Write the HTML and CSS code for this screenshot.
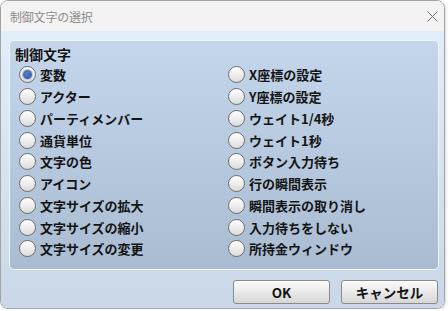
FILE: index.html
```html
<!DOCTYPE html>
<html lang="ja">
  <head>
    <meta charset="UTF-8" />
    <meta name="viewport" content="width=device-width, initial-scale=1.0" />
    <title>制御文字の選択</title>
    <link rel="stylesheet" href="styles.css">
  </head>
  <body>
    <div class="dialog">
      <div class="titlebar">
        <span class="title">制御文字の選択</span>
        <svg class="close" width="11" height="11" viewBox="0 0 11 11" aria-label="閉じる">
          <path d="M0.5 0.5 L10.5 10.5 M10.5 0.5 L0.5 10.5" stroke="#727272" stroke-width="1" fill="none" />
        </svg>
      </div>

      <div class="content">
        <div class="group">
          <div class="legend">制御文字</div>
          <div class="options">
            <label class="option"><span class="radio checked"></span>変数</label>
            <label class="option"><span class="radio"></span>X座標の設定</label>
            <label class="option"><span class="radio"></span>アクター</label>
            <label class="option"><span class="radio"></span>Y座標の設定</label>
            <label class="option"><span class="radio"></span>パーティメンバー</label>
            <label class="option"><span class="radio"></span>ウェイト1/4秒</label>
            <label class="option"><span class="radio"></span>通貨単位</label>
            <label class="option"><span class="radio"></span>ウェイト1秒</label>
            <label class="option"><span class="radio"></span>文字の色</label>
            <label class="option"><span class="radio"></span>ボタン入力待ち</label>
            <label class="option"><span class="radio"></span>アイコン</label>
            <label class="option"><span class="radio"></span>行の瞬間表示</label>
            <label class="option"><span class="radio"></span>文字サイズの拡大</label>
            <label class="option"><span class="radio"></span>瞬間表示の取り消し</label>
            <label class="option"><span class="radio"></span>文字サイズの縮小</label>
            <label class="option"><span class="radio"></span>入力待ちをしない</label>
            <label class="option"><span class="radio"></span>文字サイズの変更</label>
            <label class="option"><span class="radio"></span>所持金ウィンドウ</label>
          </div>
        </div>

        <div class="buttons">
          <button class="btn">OK</button>
          <button class="btn">キャンセル</button>
        </div>
      </div>
    </div>
  </body>
</html>
```

FILE: styles.css
```css
body {
  margin: 0;
  background-color: #ffffff;
  font-family: "Noto Sans CJK JP", "Noto Sans", sans-serif;
}

.dialog {
  width: 443px;
  height: 307px;
  border: 1px solid #a3a3a3;
  border-radius: 8px;
  overflow: hidden;
  display: flex;
  flex-direction: column;
  box-shadow: 1px 1px 3px rgba(0, 0, 0, 0.15);
}

.titlebar {
  height: 30px;
  flex: none;
  display: flex;
  align-items: center;
  justify-content: space-between;
  padding: 0 6px 0 9px;
  background-color: #f3f3f3;
}

.title {
  font-size: 12px;
  color: #8c8c8c;
  letter-spacing: -0.2px;
}

.close {
  display: block;
  margin-right: 0;
}

.content {
  flex: 1;
  display: flex;
  flex-direction: column;
  padding: 9px 5px 0 8px;
  background: linear-gradient(#e2edfa, #c9d7e6);
}

.group {
  height: 224px;
  border: 1px solid #f3f7fc;
  border-radius: 5px;
  background: linear-gradient(#c3d6eb, #a9bcd2);
  padding: 4px 0 0 0;
  box-sizing: content-box;
}

.legend {
  font-size: 14px;
  font-weight: bold;
  line-height: 19px;
  padding-left: 5px;
  color: #111;
  text-shadow: 0 0 2px rgba(255, 255, 255, 0.6);
}

.options {
  display: grid;
  grid-template-columns: 209px 1fr;
  grid-auto-rows: 21.75px;
  padding-left: 9px;
}

.option {
  display: flex;
  align-items: center;
  gap: 4px;
  font-size: 13px;
  font-weight: bold;
  color: #141414;
  white-space: nowrap;
}

.radio {
  width: 15px;
  height: 15px;
  flex: none;
  border: 1px solid #6c6c6c;
  border-radius: 50%;
  background: linear-gradient(#ffffff, #dcdcdc);
  display: flex;
  align-items: center;
  justify-content: center;
}

.radio.checked::after {
  content: "";
  width: 9px;
  height: 9px;
  border-radius: 50%;
  background: radial-gradient(circle at 40% 35%, #5a7cc4, #34519c);
  box-shadow: 0 0 0 1px #b5c3e0;
}

.buttons {
  display: flex;
  justify-content: flex-end;
  gap: 11px;
  margin-top: 10px;
  padding-right: 1px;
}

.btn {
  width: 97px;
  height: 24px;
  border: 1px solid #8a8a8a;
  border-radius: 3px;
  background: linear-gradient(#fbfbfb, #e9e9e9 50%, #d6d6d6);
  font-family: "Noto Sans CJK JP", "Noto Sans", sans-serif;
  font-size: 13.5px;
  font-weight: bold;
  color: #151515;
  padding: 0;
  cursor: pointer;
}
```
